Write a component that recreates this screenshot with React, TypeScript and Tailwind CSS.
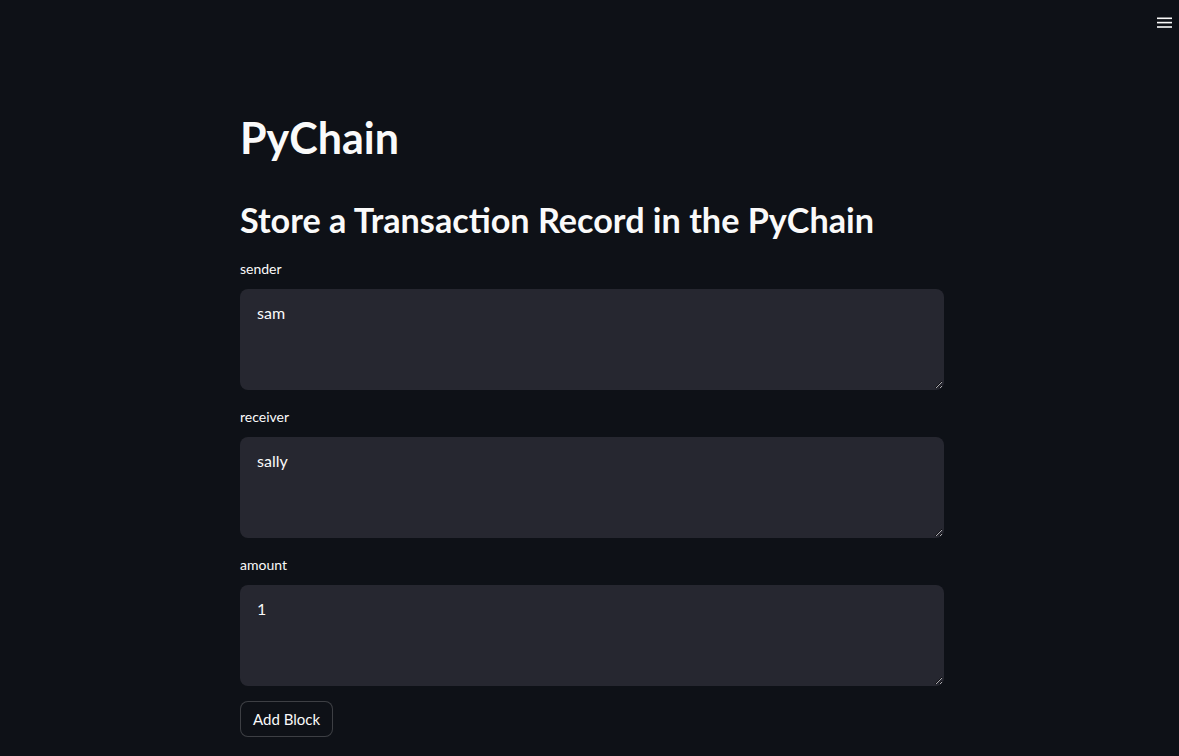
import React from "react";

const font = { fontFamily: '"Lato", "Open Sans", sans-serif' };

function Field({ label, value }: { label: string; value: string }) {
  return (
    <div className="flex flex-col">
      <label className="text-[14px] leading-[1.2] h-[17px] text-[#fafafa]">{label}</label>
      <textarea
        readOnly
        defaultValue={value}
        className="mt-[11px] w-[704px] h-[101px] rounded-lg bg-[#262730] text-[#fafafa] text-[16px] leading-[1.6] pl-4 pr-4 pt-[10px] pb-4 outline-none border border-transparent [color-scheme:dark] resize-y"
        style={font}
      />
    </div>
  );
}

export default function App() {
  return (
    <div className="min-h-screen w-full bg-[#0e1117] text-[#fafafa] relative overflow-hidden" style={font}>
      <div className="absolute top-0 right-0 w-[40px] h-[44px] flex items-start justify-end">
        <svg width="16" height="12" viewBox="0 0 16 12" className="mt-[17px] mr-[6px]">
          <rect x="0" y="0.5" width="15" height="1.6" fill="#fafafa" />
          <rect x="0" y="4.8" width="15" height="1.6" fill="#fafafa" />
          <rect x="0" y="9.2" width="15" height="1.6" fill="#fafafa" />
        </svg>
      </div>
      <main className="pl-[240px] pt-[112px] w-[944px] flex flex-col">
        <h1 className="text-[43px] leading-[1.2] font-bold h-[53px]">PyChain</h1>
        <h2 className="mt-[34px] text-[34.2px] leading-[1.2] font-bold h-[42px]">Store a Transaction Record in the PyChain</h2>
        <div className="mt-[20px] flex flex-col gap-[19px]">
          <Field label="sender" value="sam" />
          <Field label="receiver" value="sally" />
          <Field label="amount" value="1" />
        </div>
        <div className="mt-[15px]">
          <button className="h-[36px] px-3 rounded-lg border border-[rgba(250,250,250,0.2)] bg-[#0e1117] text-[15px] text-[#fafafa]" style={font}>
            Add Block
          </button>
        </div>
      </main>
    </div>
  );
}
